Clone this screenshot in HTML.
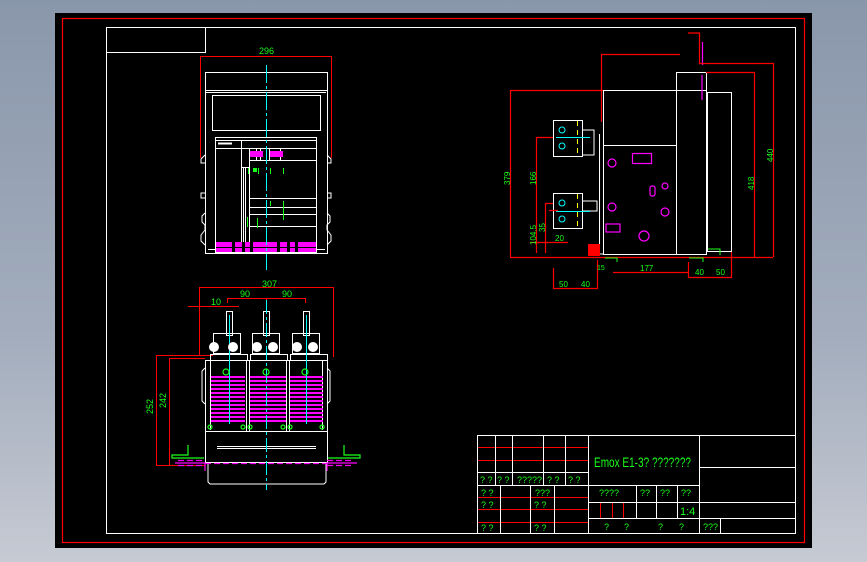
<!DOCTYPE html>
<html><head><meta charset="utf-8"><style>
html,body{margin:0;padding:0;width:867px;height:562px;overflow:hidden;background:linear-gradient(#8a97ab,#a3adbd 60%,#c6cad3);}
svg{display:block}
text{font-family:"Liberation Sans Narrow","Liberation Sans",sans-serif;fill:#1aff1a}
</style></head><body>
<svg width="867" height="562" viewBox="0 0 867 562" xmlns="http://www.w3.org/2000/svg">
<defs>
<pattern id="mg" width="8" height="4" patternUnits="userSpaceOnUse"><rect width="8" height="2" fill="#ff00ff"/></pattern>
</defs>
<rect x="55" y="13" width="757" height="535" fill="#000"/>
<rect x="62.5" y="18.5" width="742" height="524" fill="none" stroke="#f00" stroke-width="1.2"/>
<g fill="none" stroke="#fff" stroke-width="1">
<rect x="106.5" y="27.5" width="689" height="506"/>
<path d="M106 52.5H205.5V27"/>
</g>

<!-- FRONT VIEW -->
<g fill="none" stroke="#f00" stroke-width="1">
<path d="M200.5 158V56.5H331.5V158"/>
</g>
<text x="259" y="54" font-size="9">296</text>
<g fill="none" stroke="#fff" stroke-width="1">
<rect x="205.5" y="72.5" width="122" height="181"/>
<path d="M205 90.5H327M206 92.5H326M208 249.5H325"/>
<rect x="212.5" y="95.5" width="108" height="35"/>
<rect x="215.5" y="137.5" width="101" height="115"/>
<path d="M215 140.5H317M241.5 140V252M215 148.5H317M249.5 148V242M256.5 148V160M260.5 148V160M269.5 148V160M280.5 148V160M249 160.5H317M249 167.5H241M249 198.5H317M249 207.5H317M249 214.5H317M249 226.5H317M243.5 167V242M245.5 167V242"/>
<path d="M205 155l-4 4v4h4M327 155l4 4v4h-4M205 193h-4v5h4M327 193h4v5h-4M205 213l-3 3v6l3 3v5l-4 5v6l4 4M327 213l3 3v6l-3 3v5l4 5v6l-4 4"/>
</g>
<path d="M218 143.5H232" stroke="#fff" stroke-width="2"/>
<rect x="250" y="151" width="13" height="6" fill="#f0f"/><rect x="270" y="151" width="13" height="6" fill="#f0f"/>
<rect x="216" y="242" width="100" height="10" fill="#f0f"/>
<path d="M216 247.5H316" stroke="#000" stroke-width="1"/>
<g fill="#000"><rect x="232" y="242" width="3" height="10"/><rect x="242" y="242" width="3" height="10"/><rect x="250" y="242" width="3" height="10"/><rect x="277" y="242" width="3" height="10"/><rect x="287" y="242" width="3" height="10"/><rect x="295" y="242" width="3" height="10"/></g>
<g stroke="#1aff1a" stroke-width="1"><path d="M248.5 168V174M258.5 168V174M270.5 168V174M283.5 168V174M270.5 201V206M283.5 201V220M247.5 217V227M257.5 218V228"/></g>
<rect x="253" y="168" width="4" height="4" fill="#1aff1a"/>
<path d="M266.5 65V270" stroke="#0ff" stroke-width="1" stroke-dasharray="18,3,3,3"/>

<!-- BOTTOM VIEW -->
<g fill="none" stroke="#f00" stroke-width="1">
<path d="M199.5 355V287.5H333.5V357"/>
<path d="M227.5 303V298.5H305.5V303M266.5 298V305"/>
<path d="M188 306.5H239"/>
<path d="M156.5 465V355.5H213M169.5 465V358.5H205M156 465.5H205"/>
</g>
<text x="262" y="287" font-size="9">307</text>
<text x="240" y="297" font-size="9">90</text>
<text x="282" y="297" font-size="9">90</text>
<text x="211" y="305" font-size="9">10</text>
<text x="0" y="0" font-size="9" transform="translate(153,414) rotate(-90)">252</text>
<text x="0" y="0" font-size="9" transform="translate(166,408) rotate(-90)">242</text>
<g fill="none" stroke="#fff" stroke-width="1">
<rect x="226.5" y="311.5" width="6" height="24"/><rect x="263.5" y="311.5" width="6" height="24"/><rect x="303.5" y="311.5" width="6" height="24"/>
<rect x="213.5" y="333.5" width="27" height="20"/><rect x="252.5" y="333.5" width="27" height="20"/><rect x="292.5" y="333.5" width="27" height="20"/>
<rect x="210.5" y="354.5" width="37" height="6"/><rect x="250.5" y="354.5" width="37" height="6"/><rect x="290.5" y="354.5" width="37" height="6"/>
<rect x="205.5" y="360.5" width="122" height="71"/>
<path d="M246.5 360V431M249.5 360V431M286.5 360V431M289.5 360V431M210.5 360V430M322.5 360V430"/>
<rect x="205.5" y="431.5" width="122" height="31"/>
<path d="M217 448.5H316M217 446.5H316"/>
<path d="M208 462v20l2 2h114l2-2v-20"/>
<path d="M205 368l-3 3v30l3 3M327 368l3 3v30l-3 3"/>
</g>
<rect x="211" y="374" width="34" height="50" fill="url(#mg)"/>
<rect x="250" y="374" width="36" height="50" fill="url(#mg)"/>
<rect x="290" y="374" width="33" height="50" fill="url(#mg)"/>
<g stroke="#0ff" stroke-width="1"><path d="M229.5 315V424M306.5 315V424"/></g>
<path d="M266.5 300V490" stroke="#0ff" stroke-dasharray="14,3,3,3"/>
<g fill="none" stroke="#1aff1a" stroke-width="1.2"><circle cx="226" cy="372" r="3"/><circle cx="266" cy="372" r="3"/><circle cx="305" cy="372" r="3"/><circle cx="210" cy="427" r="2"/><circle cx="243" cy="427" r="2"/><circle cx="250" cy="427" r="2"/><circle cx="283" cy="427" r="2"/><circle cx="290" cy="427" r="2"/><circle cx="322" cy="427" r="2"/>
<path d="M188 445v10h-16v3h32M344 445v10h16v3h-32"/></g>
<g fill="none" stroke="#f0f" stroke-width="1.2"><path d="M178 460.5H205M327 460.5H353M178 465.5H205M327 465.5H353M205 463.5H327" stroke-dasharray="6,3"/><path d="M175 463h30v8M357 463h-30v8"/></g>
<g fill="#fff"><circle cx="214" cy="347" r="5"/><circle cx="233" cy="347" r="5"/><circle cx="257" cy="347" r="5"/><circle cx="273" cy="347" r="5"/><circle cx="297" cy="347" r="5"/><circle cx="313" cy="347" r="5"/></g>

<!-- SIDE VIEW -->
<g fill="none" stroke="#fff" stroke-width="1">
<rect x="603.5" y="90.5" width="73" height="164"/>
<path d="M603 145.5H676"/>
<rect x="676.5" y="72.5" width="30" height="182"/>
<path d="M676 90.5H706"/>
<rect x="707.5" y="92.5" width="24" height="159"/>
<path d="M599.5 134V254H603"/>
<rect x="553.5" y="120.5" width="29" height="36"/>
<rect x="553.5" y="193.5" width="29" height="35"/>
<path d="M582 130h12v25h-12M582 201h15v10h-15"/>
</g>
<g stroke="#ff0" stroke-width="1" stroke-dasharray="5,4"><path d="M577.5 121V156M577.5 194V228"/></g>
<g fill="none" stroke="#0ff"><path d="M556 137.5H590M556 211.5H590"/><circle cx="562" cy="130" r="3"/><circle cx="562" cy="146" r="3"/><circle cx="562" cy="203" r="3"/><circle cx="562" cy="219" r="3"/></g>
<g fill="none" stroke="#f0f" stroke-width="1.2">
<rect x="632.5" y="153.5" width="19" height="10"/><circle cx="612" cy="163" r="4"/><circle cx="665" cy="186" r="3"/><rect x="650" y="186" width="5" height="10" rx="2"/><circle cx="644" cy="236" r="5"/><circle cx="665" cy="212" r="4"/><rect x="606" y="224" width="14" height="8"/><circle cx="612" cy="207" r="4"/><path d="M702.5 42V65M702 75V100"/>
</g>
<g fill="none" stroke="#f00" stroke-width="1.2">
<path d="M510.5 257V90.5H603M510 257.5H773"/>
<path d="M773.5 257V63.5H699.5V33H688M754.5 257V72.5H706"/>
<path d="M601.5 122V54.5H680"/>
<path d="M536.5 253V137.5H553M545.5 253V203.5H553M549 210.5H558"/>
<path d="M613 272.5H688M553.5 268V288.5H597.5V260M688.5 262V277.5H731.5V252"/>
<path d="M530 242.5H568"/>
</g>
<rect x="588" y="244" width="12" height="12" fill="#f00"/>
<text x="0" y="0" font-size="8" transform="translate(510,185) rotate(-90)">379</text>
<text x="0" y="0" font-size="8" transform="translate(536,185) rotate(-90)">166</text>
<text x="0" y="0" font-size="8" transform="translate(536,245) rotate(-90)">104.5</text>
<text x="0" y="0" font-size="8" transform="translate(545,232) rotate(-90)">35</text>
<text x="0" y="0" font-size="8" transform="translate(773,162) rotate(-90)">440</text>
<text x="0" y="0" font-size="8" transform="translate(754,190) rotate(-90)">418</text>
<text x="555" y="241" font-size="8">20</text>
<text x="640" y="271" font-size="8">177</text>
<text x="559" y="287" font-size="8">50</text>
<text x="581" y="287" font-size="8">40</text>
<text x="695" y="275" font-size="8">40</text>
<text x="716" y="275" font-size="8">50</text>
<text x="597" y="270" font-size="7">15</text>
<g stroke="#1aff1a" fill="none"><path d="M605 258h12v4M689 258h14v4M708 249h12v6"/></g>

<!-- TITLE BLOCK -->
<g fill="none" stroke="#f00" stroke-width="1">
<path d="M477 447.5H588M477 460.5H588M477 497.5H588M477 509.5H588M477 522.5H588M600.5 502V518M612.5 502V518M623.5 502V518"/>
</g>
<g fill="none" stroke="#fff" stroke-width="1">
<path d="M477.5 435.5H795M477.5 435V534M495.5 435V485M512.5 435V485M543.5 435V485M565.5 435V485M588.5 435V534M699.5 435V534M477 472.5H588M477 485.5H699M500.5 485V534M530.5 485V534M554.5 485V534M636.5 485V518M656.5 485V518M677.5 485V518M588 502.5H795M588 518.5H795M699 467.5H795M720.5 518V534"/>
</g>
<text x="594" y="467" font-size="14" textLength="97" lengthAdjust="spacingAndGlyphs">Emox E1-3? ???????</text>
<g font-size="9">
<text x="480" y="483">? ?</text><text x="497" y="483">? ?</text><text x="517" y="483">?????</text><text x="547" y="483">? ?</text><text x="568" y="483">?  ?</text>
<text x="481" y="496">?  ?</text><text x="535" y="496">???</text>
<text x="481" y="508">?  ?</text><text x="534" y="508">?  ?</text>
<text x="481" y="531">?  ?</text><text x="534" y="531">?  ?</text>
<text x="599" y="496">????</text><text x="640" y="496">??</text><text x="660" y="496">??</text><text x="681" y="496">??</text>
<text x="604" y="530">?</text><text x="624" y="530">?</text><text x="658" y="530">?</text><text x="679" y="530">?</text>
<text x="703" y="530">???</text>
</g>
<text x="680" y="515" font-size="11">1:4</text>
</svg>
</body></html>
